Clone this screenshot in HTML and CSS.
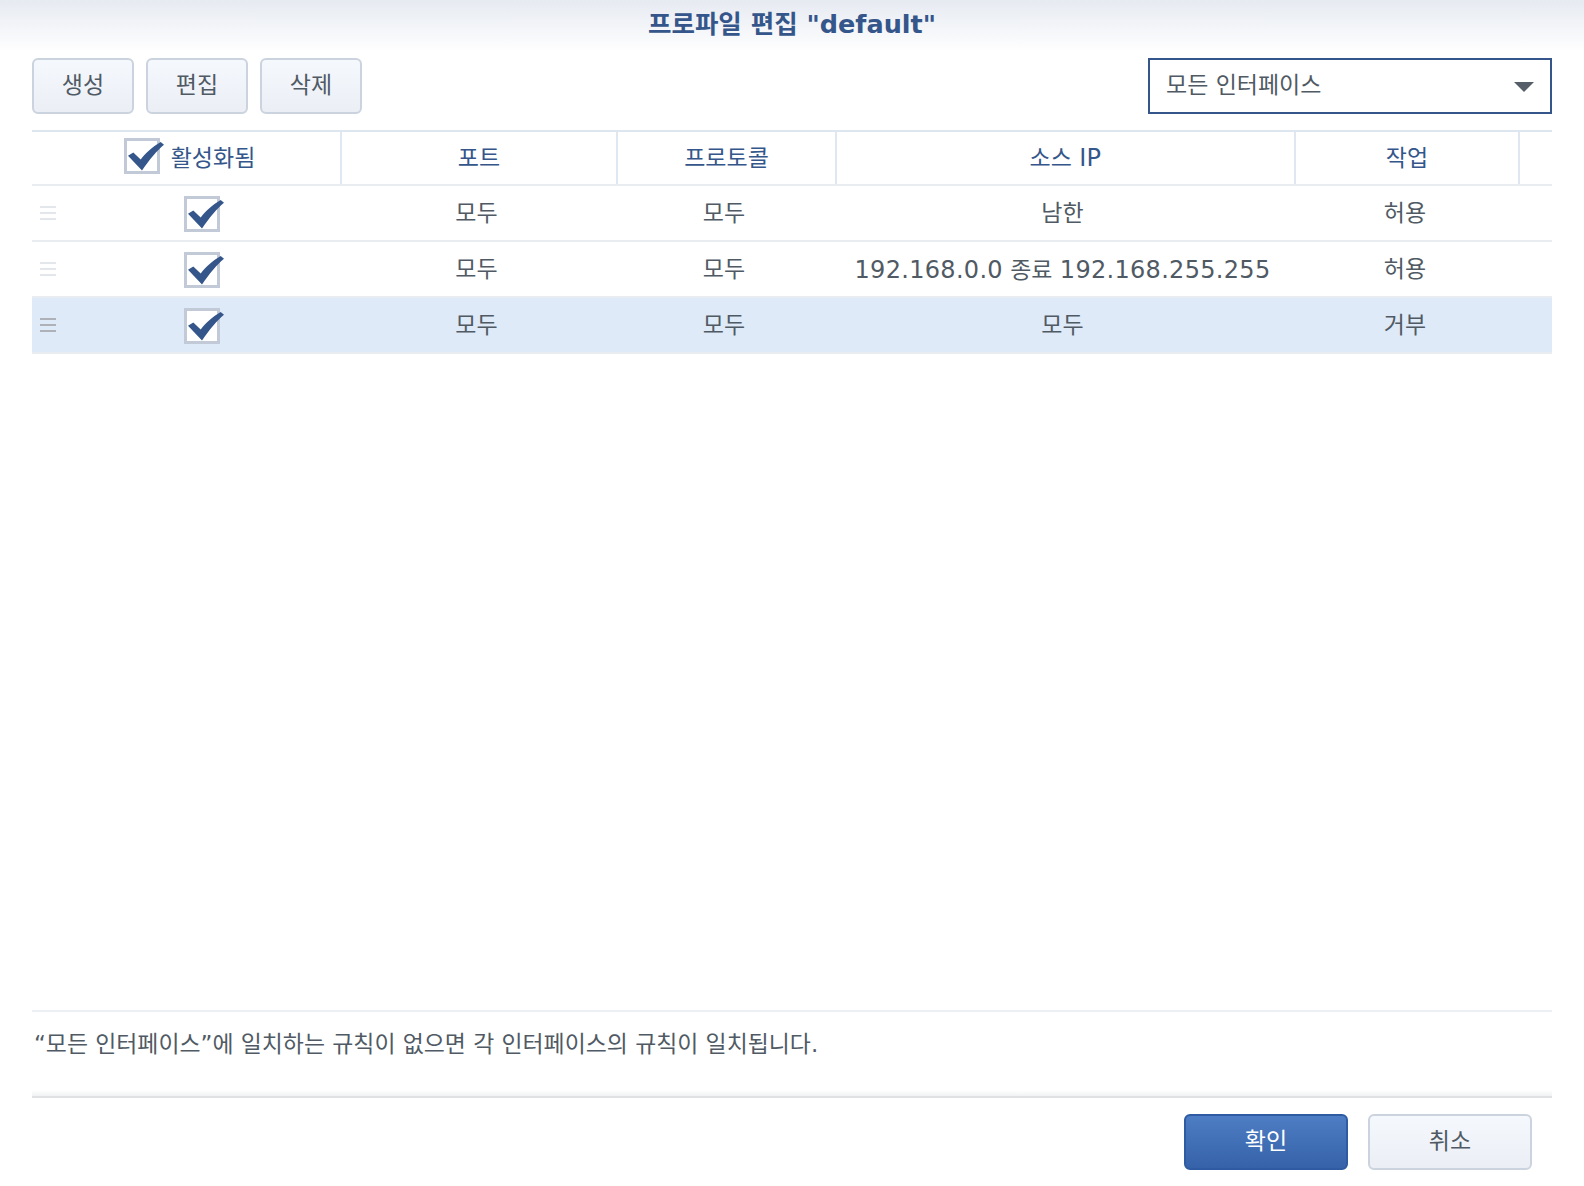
FILE: index.html
```html
<!DOCTYPE html>
<html lang="ko">
<head>
<meta charset="utf-8">
<title>프로파일 편집</title>
<link rel="stylesheet" href="styles.css">
</head>
<body>
<div class="dialog">
  <header class="title">프로파일 편집 "default"</header>
  <div class="content">
    <div class="toolbar">
      <div class="tools">
        <button class="btn">생성</button>
        <button class="btn">편집</button>
        <button class="btn">삭제</button>
      </div>
      <div class="select"><span>모든 인터페이스</span><i class="caret"></i></div>
    </div>
    <div class="grid">
      <div class="row head">
        <div class="cell c-en"><span class="check head-check"><svg viewBox="0 0 44 36"><path d="M4 17.700 L9.300 14.500 L16.700 21.500 C21 15.500 28 9 36.700 4 L40 6.700 C33 12.500 25.500 21.500 18 32.500 Z"/></svg></span><span>활성화됨</span></div>
        <div class="cell c-port">포트</div>
        <div class="cell c-proto">프로토콜</div>
        <div class="cell c-ip"><span>소스 <span class="latin">IP</span></span></div>
        <div class="cell c-act">작업</div>
        <div class="cell c-end"></div>
      </div>
      <div class="row">
        <div class="cell c-en"><span class="grip"></span><span class="check"><svg viewBox="0 0 44 36"><path d="M4 17.700 L9.300 14.500 L16.700 21.500 C21 15.500 28 9 36.700 4 L40 6.700 C33 12.500 25.500 21.500 18 32.500 Z"/></svg></span></div>
        <div class="cell c-port">모두</div>
        <div class="cell c-proto">모두</div>
        <div class="cell c-ip">남한</div>
        <div class="cell c-act">허용</div>
      </div>
      <div class="row">
        <div class="cell c-en"><span class="grip"></span><span class="check"><svg viewBox="0 0 44 36"><path d="M4 17.700 L9.300 14.500 L16.700 21.500 C21 15.500 28 9 36.700 4 L40 6.700 C33 12.500 25.500 21.500 18 32.500 Z"/></svg></span></div>
        <div class="cell c-port">모두</div>
        <div class="cell c-proto">모두</div>
        <div class="cell c-ip range"><span><span class="latin">192.168.0.0</span> 종료 <span class="latin">192.168.255.255</span></span></div>
        <div class="cell c-act">허용</div>
      </div>
      <div class="row selected">
        <div class="cell c-en"><span class="grip"></span><span class="check"><svg viewBox="0 0 44 36"><path d="M4 17.700 L9.300 14.500 L16.700 21.500 C21 15.500 28 9 36.700 4 L40 6.700 C33 12.500 25.500 21.500 18 32.500 Z"/></svg></span></div>
        <div class="cell c-port">모두</div>
        <div class="cell c-proto">모두</div>
        <div class="cell c-ip">모두</div>
        <div class="cell c-act">거부</div>
      </div>
    </div>
    <p class="note">“모든 인터페이스”에 일치하는 규칙이 없으면 각 인터페이스의 규칙이 일치됩니다.</p>
    <footer class="actions">
      <button class="btn wide primary">확인</button>
      <button class="btn wide">취소</button>
    </footer>
  </div>
</div>
</body>
</html>
```
FILE: styles.css
```css
* { box-sizing: border-box; }
html, body { margin: 0; height: 100%; }
body {
  background: #fff;
  color: #505a64;
  font-family: "DejaVu Sans", "Noto Sans CJK KR", sans-serif;
  font-size: 23px;
}
.dialog { width: 1584px; height: 1186px; display: flex; flex-direction: column; }
.title {
  height: 58px;
  padding-top: 4px;
  line-height: 40px;
  text-align: center;
  font-size: 25.500px;
  font-weight: 700;
  color: #35568a;
  background: linear-gradient(#e6eaf1, #ffffff 52px);
}
.content { flex: 1; padding: 0 32px; display: flex; flex-direction: column; }
.toolbar { display: flex; justify-content: space-between; height: 56px; }
.tools { display: flex; gap: 12px; }
.btn {
  width: 102px;
  height: 56px;
  border: 2px solid #cbd3de;
  border-radius: 6px;
  background: linear-gradient(#f5f8fd, #ebeff5);
  color: #505a64;
  font: inherit;
  padding: 0 0 6px;
}
.select {
  width: 404px;
  height: 56px;
  border: 2px solid #35568a;
  display: flex;
  align-items: center;
  justify-content: space-between;
  padding: 0 16px 6px;
}
.caret { width: 0; height: 0; border-style: solid; border-width: 10px 10px 0; border-color: #555e69 transparent transparent; margin-top: 8px; }
.grid { margin-top: 16px; flex: 1; border-top: 2px solid #dde5ef; border-bottom: 2px solid #eceff3; }
.row { display: flex; height: 56px; border-bottom: 2px solid #e9edf2; }
.row.head { height: 54px; color: #35568a; }
.row.selected { background: #dfeaf8; }
.cell { display: flex; align-items: center; justify-content: center; padding-bottom: 4px; }
.head .cell { border-right: 2px solid #dfe7f1; padding-bottom: 4px; }
.head .c-end { border-right: 0; }
.latin { font-size: 24px; letter-spacing: 0.300px; }
.c-en { width: 310px; position: relative; }
.head .c-en { padding-left: 7px; }
.c-port { width: 276px; }
.c-proto { width: 219px; }
.c-ip { width: 459px; }
.c-act { width: 224px; }
.c-end { flex: 1; }
.row:not(.head) .c-port { width: 276px; padding-right: 7px; }
.row:not(.head) .c-proto { padding-right: 7px; }
.row:not(.head) .c-ip { padding-right: 8px; }
.row:not(.head) .c-ip.range { padding-bottom: 2px; }
.row:not(.head) .c-act { padding-right: 6px; }
.check { width: 36px; height: 36px; border: 3px solid #c3cad7; background: #fff; position: relative; display: block; margin: 6px 0 0 30px; }
.check svg { position: absolute; left: -3px; top: -3px; width: 44px; height: 36px; fill: #35568a; }
.head-check { margin: 0 11px 0 0; }
.grip { position: absolute; left: 8px; top: 20px; width: 16px; height: 14px; border-top: 2px solid #e3e7ec; border-bottom: 2px solid #e3e7ec; }
.grip::after { content: ""; display: block; height: 2px; margin-top: 4px; background: #e3e7ec; }
.selected .grip { border-color: #aeb2b8; }
.selected .grip::after { background: #aeb2b8; }
.note { margin: 0; height: 84px; padding: 17px 2px 0; line-height: 30px; font-size: 22.900px; }
.actions {
  height: 90px;
  padding: 16px 20px 0 0;
  display: flex;
  justify-content: flex-end;
  gap: 20px;
  border-top: 2px solid #e0e1e3;
  position: relative;
}
.actions::before { content: ""; position: absolute; left: 0; right: 0; top: -8px; height: 6px; background: linear-gradient(#fff, #f1f2f3); }
.btn.wide { width: 164px; }
.btn.primary { background: linear-gradient(#4d7dc4, #3662a9); border-color: #2f5ba2; color: #fff; }
```
